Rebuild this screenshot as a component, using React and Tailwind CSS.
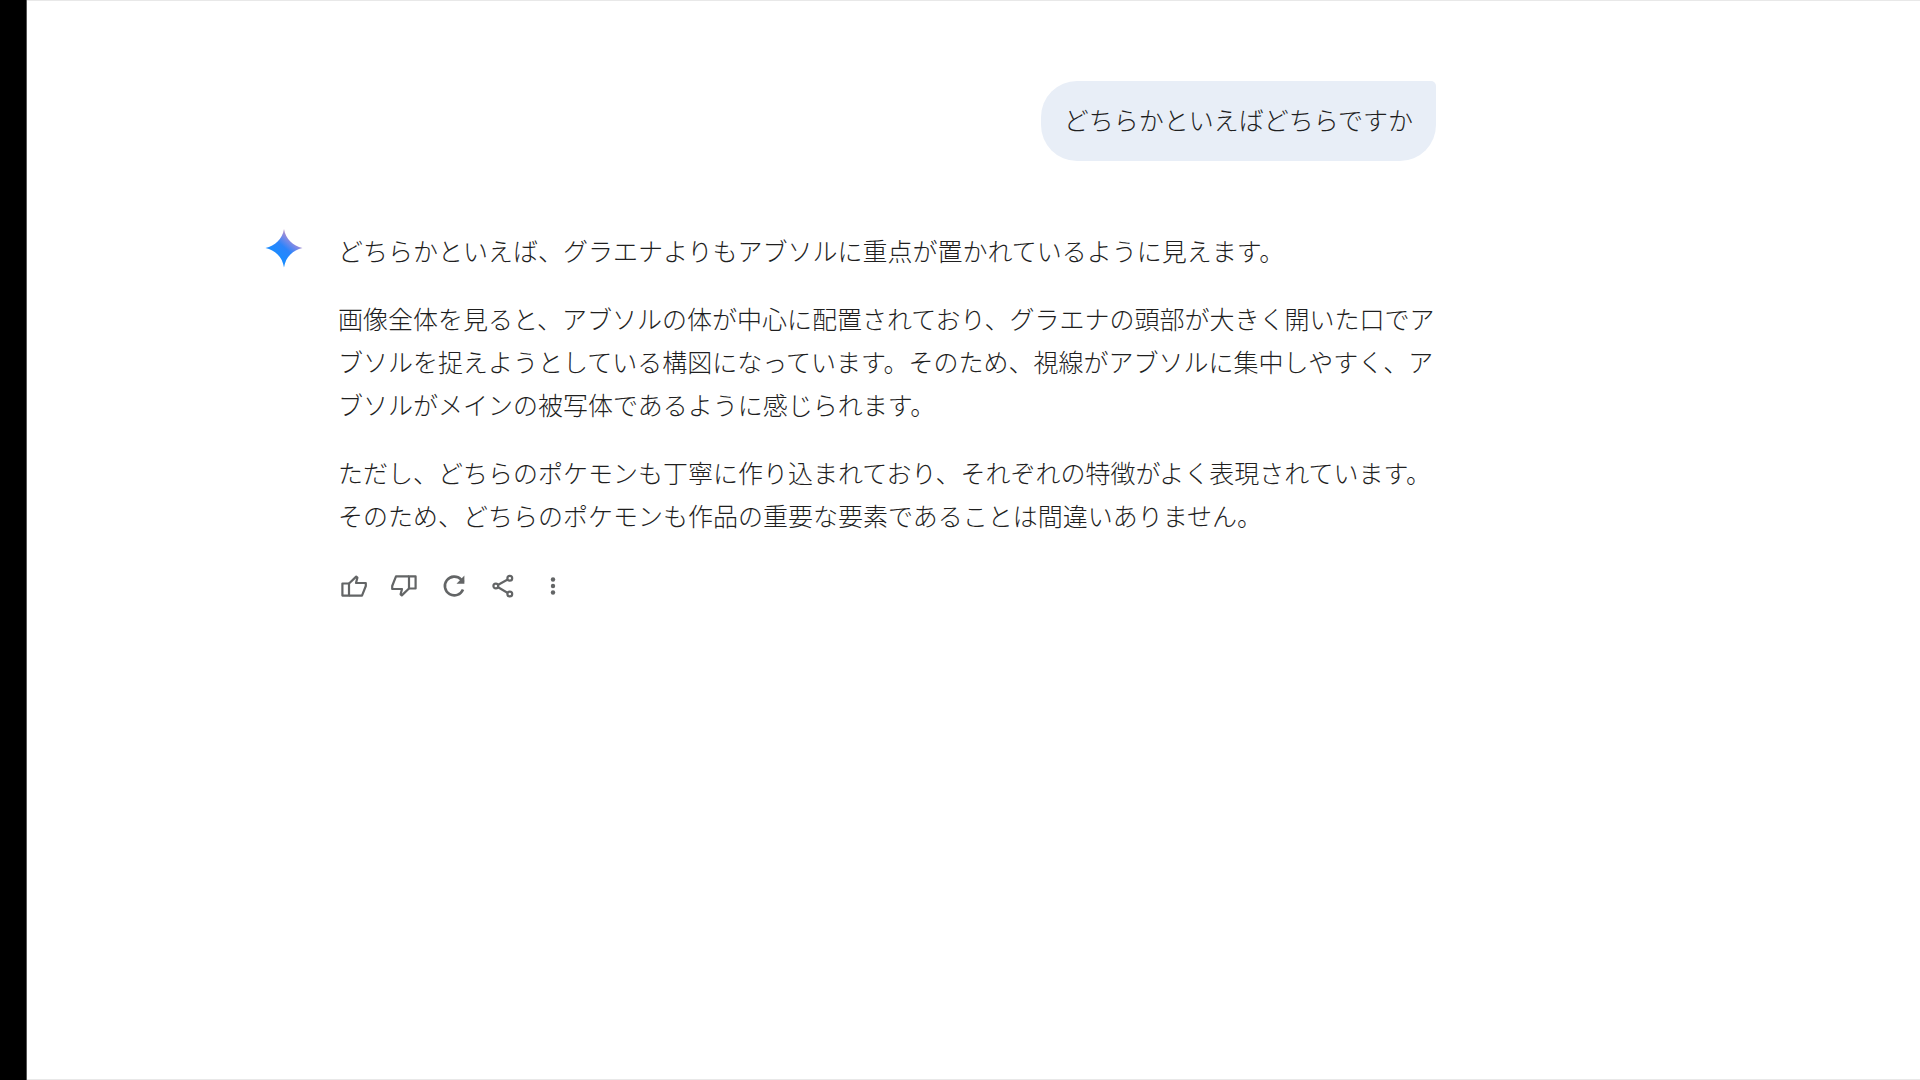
import React from "react";

const paragraphs = [
  "どちらかといえば、グラエナよりもアブソルに重点が置かれているように見えます。",
  "画像全体を見ると、アブソルの体が中心に配置されており、グラエナの頭部が大きく開いた口でアブソルを捉えようとしている構図になっています。そのため、視線がアブソルに集中しやすく、アブソルがメインの被写体であるように感じられます。",
  "ただし、どちらのポケモンも丁寧に作り込まれており、それぞれの特徴がよく表現されています。そのため、どちらのポケモンも作品の重要な要素であることは間違いありません。",
];

function Sparkle() {
  return (
    <svg className="h-10 w-10 shrink-0" viewBox="0 1 40 40" aria-hidden="true">
      <defs>
        <linearGradient id="sparkle" x1="12" y1="28" x2="29" y2="8" gradientUnits="userSpaceOnUse">
          <stop offset="0" stopColor="#1a8cff" />
          <stop offset="0.45" stopColor="#2b84fb" />
          <stop offset="0.75" stopColor="#7d8ae6" />
          <stop offset="1" stopColor="#c08fc0" />
        </linearGradient>
      </defs>
      <path
        d="M20 1C20.8 6 23.2 10.6 26.4 13.6C29.6 16.6 33.6 19 38.5 20C33.6 21 29.6 23.4 26.4 26.4C23.2 29.4 20.8 34 20 39.5C19.2 34 16.8 29.4 13.6 26.4C10.4 23.4 6.4 21 1.5 20C6.4 19 10.4 16.6 13.6 13.6C16.8 10.6 19.2 6 20 1Z"
        fill="url(#sparkle)"
      />
    </svg>
  );
}

function ThumbShape() {
  return (
    <>
      <path d="M1.4 10.5H8V22.6H1.4Z" />
      <path d="M8 10.5L15.2 3.6L16.4 4.6L15 10H24.8V13L21 22.6H8" />
    </>
  );
}

function ActionButton({ label, children }) {
  return (
    <button type="button" aria-label={label} className="cursor-pointer text-[#636566]">
      <svg
        className="h-[26px] w-[26px]"
        viewBox="0 0 26 26"
        fill="none"
        stroke="currentColor"
        strokeWidth="2.2"
        strokeLinejoin="round"
      >
        {children}
      </svg>
    </button>
  );
}

export default function App() {
  return (
    <div className="flex min-h-screen bg-white">
      <div className="w-[27px] shrink-0 border-r border-[#555] bg-black" />
      <main className="flex-1 border-y border-[#e8e8e8] pt-20 pl-[237px] font-['Noto_Sans_CJK_JP',sans-serif] text-[25px] leading-[43px] font-light text-[#1f1f1f]">
        <div className="max-w-[1174px]">
          <div className="flex justify-end pr-0.5">
            <p className="rounded-[36px] rounded-tr-[5px] bg-[#e8eef7] px-[23px] pt-[17px] pb-5">
              どちらかといえばどちらですか
            </p>
          </div>

          <div className="mt-[68px] flex gap-[34px]">
            <Sparkle />
            <div className="flex-1">
              <div className="space-y-[25px]">
                {paragraphs.map((text) => (
                  <p key={text}>{text}</p>
                ))}
              </div>

              <div className="mt-9 flex gap-6 pl-[3px]">
                <ActionButton label="良い回答">
                  <ThumbShape />
                </ActionButton>
                <ActionButton label="悪い回答">
                  <g transform="rotate(180 13 13)">
                    <ThumbShape />
                  </g>
                </ActionButton>
                <ActionButton label="やり直す">
                  <path d="M22 16.5A9.4 9.4 0 1 1 20 6.4L22.6 9" strokeWidth="2.6" />
                  <path d="M23.4 2.5V10.8H15.5Z" fill="currentColor" stroke="none" />
                </ActionButton>
                <ActionButton label="共有">
                  <path d="M5 13L18.5 5.5M5 13L18.5 21" />
                  <circle cx="4.8" cy="13" r="2.4" fill="white" />
                  <circle cx="18.8" cy="5.2" r="2.4" fill="white" />
                  <circle cx="18.8" cy="21" r="2.4" fill="white" />
                </ActionButton>
                <ActionButton label="その他">
                  <g fill="currentColor" stroke="none">
                    <circle cx="12" cy="6.5" r="2.2" />
                    <circle cx="12" cy="13" r="2.2" />
                    <circle cx="12" cy="19.5" r="2.2" />
                  </g>
                </ActionButton>
              </div>
            </div>
          </div>
        </div>
      </main>
    </div>
  );
}
